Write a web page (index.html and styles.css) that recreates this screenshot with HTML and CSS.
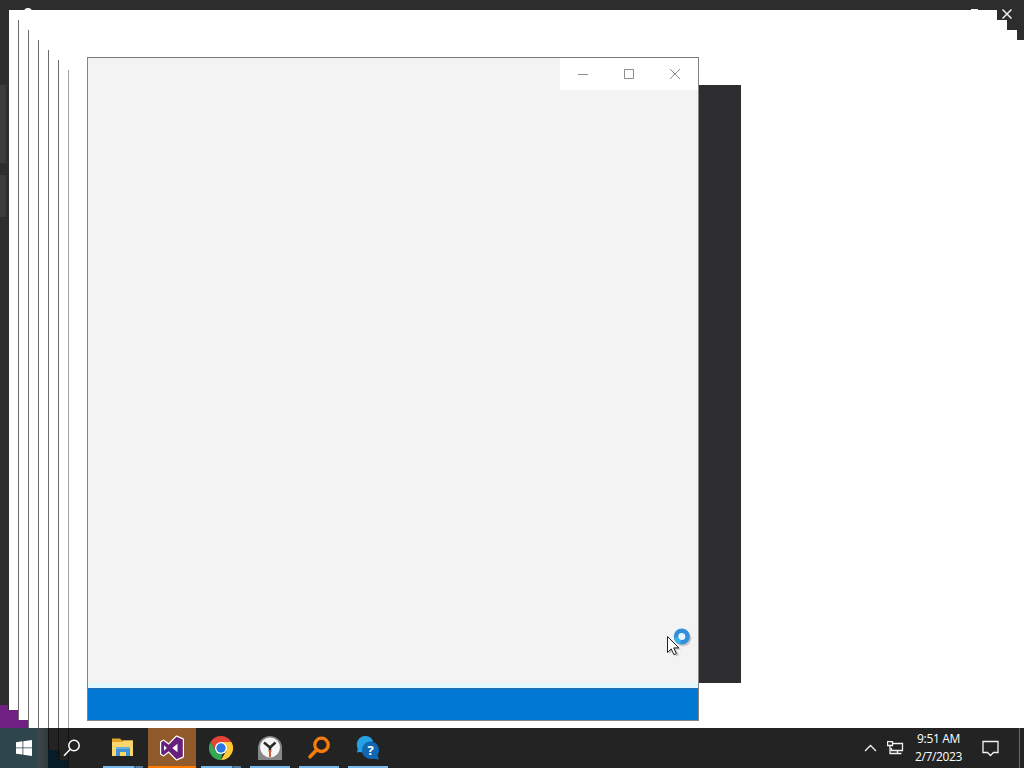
FILE: index.html
```html
<!DOCTYPE html>
<html lang="en">
<head>
  <meta charset="utf-8">
  <title>Desktop</title>
  <link rel="stylesheet" href="styles.css">
</head>
<body>
  <main class="desktop">
    <div class="side-panel panel-one"></div>
    <div class="side-panel panel-two"></div>
    <div class="wallpaper"></div>
    <div class="app-logo"></div>
    <svg class="app-close" viewBox="0 0 10 10"><path d="M.5.5l9 9M9.5.5l-9 9"/></svg>

    <!-- trail of unpainted windows -->
    <div class="ghost ghost-1"></div>
    <div class="ghost ghost-2"></div>
    <div class="ghost ghost-3"></div>
    <div class="ghost ghost-4"></div>
    <div class="ghost ghost-5"></div>
    <div class="ghost ghost-6"></div>
    <div class="ghost ghost-7"></div>
    <div class="app-restore"></div>

    <div class="dark-window"></div>

    <section class="window">
      <header class="window-header">
        <div class="window-buttons">
          <svg viewBox="0 0 46 32"><path d="M18 16.5h10"/></svg>
          <svg viewBox="0 0 46 32"><path d="M18.500 11.500h9v9h-9z"/></svg>
          <svg viewBox="0 0 46 32"><path d="M18 11l10 10M28 11l-10 10"/></svg>
        </div>
      </header>
      <div class="window-body"></div>
      <footer class="window-footer"></footer>
    </section>

    <svg class="cursor" viewBox="0 0 28 32">
      <circle class="busy-shadow" cx="17.300" cy="12.300" r="8"/>
      <circle class="busy-ring" cx="15.800" cy="10.500" r="5.800"/>
      <path class="busy-light" d="M10 11.500a5.800 5.800 0 0 0 4.800 4.800"/>
      <path class="arrow-shadow" d="M3 12v16l4-3.500 3 6 3-1.500-3-5.500h5z"/>
      <path class="arrow" d="M1.500 10.500v16l3.700-3.600 2.700 5.800 2.500-1.200-2.700-5.600h5.200z"/>
    </svg>
  </main>

  <footer class="taskbar">
    <div class="start">
      <svg width="16" height="16" viewBox="0 0 16 16"><path fill="#fff" d="M0 2.200l6.500-.9v6.200H0zM7.300 1.200L16 0v7.500H7.300zM0 8.300h6.500v6.300L0 13.700zM7.300 8.300H16V16l-8.700-1.200z"/></svg>
    </div>
    <div class="search">
      <svg width="18" height="18" viewBox="0 0 18 18" fill="none" stroke="#fff" stroke-width="1.500"><circle cx="11" cy="6.500" r="5.200"/><path d="M7.300 10.200L1 16.800"/></svg>
    </div>
    <nav class="apps">
      <div class="app stacked">
        <svg width="24" height="24" viewBox="0 0 24 24">
          <path fill="#e5a526" d="M1 2.500h8l2 2h11v3H1z"/>
          <path fill="#fbd66b" d="M1 6h10l1.500-1.500H22V20H1z"/>
          <path fill="#3f93d2" d="M5 12h14v8h-4v-4H9v4H5z"/>
          <path fill="#67b0df" d="M5 11h14v2H5z"/>
        </svg>
      </div>
      <div class="app active">
        <svg width="26" height="26" viewBox="0 0 26 26">
          <path fill="#fff" stroke="#fff" stroke-width="2" stroke-linejoin="round" d="M17.500 1.500L24 4.200v17.600l-6.500 2.700-7.800-8-5.200 4L2 19V7l2.500-1.500 5.200 4z"/>
          <path fill="#68217a" d="M17.500 1.800L23.800 4.400v17.200l-6.300 2.600-7.800-8-5.200 4L2.200 18.800V7.200l2.300-1.400 5.200 4z"/>
          <path fill="#fff" d="M18.500 8.800L13.300 13l5.200 4.200zM5 10.300v5.400L7.800 13z"/>
        </svg>
      </div>
      <div class="app stacked">
        <svg width="24" height="24" viewBox="0 0 24 24">
          <path fill="#e94335" d="M1.600 6A12 12 0 0 1 22.400 6H12L6.800 15z"/>
          <path fill="#34a853" d="M1.600 6l5.200 9 6.700 2.800L12 24A12 12 0 0 1 1.600 6z"/>
          <path fill="#fcc934" d="M22.400 6A12 12 0 0 1 12 24l5.200-9L12 6z"/>
          <circle fill="#fff" cx="12" cy="12" r="6"/><circle fill="#2b78e4" cx="12" cy="12" r="4.700"/>
        </svg>
      </div>
      <div class="app">
        <svg width="24" height="24" viewBox="0 0 24 24">
          <path fill="#858789" d="M12 0a12 12 0 0 1 12 12v12H0V12A12 12 0 0 1 12 0z"/>
          <circle fill="#f5f5f3" cx="12" cy="11.500" r="10"/>
          <path fill="none" stroke="#292929" stroke-width="2.500" d="M6 6.500l6 5 5.500-5"/>
          <path stroke="#292929" stroke-width="2.500" d="M12 10.500V16"/>
          <path stroke="#d65a2a" stroke-width="2" d="M12 14v7"/>
        </svg>
      </div>
      <div class="app">
        <svg width="24" height="24" viewBox="0 0 24 24" fill="none" stroke="#f57c0c"><circle cx="14.500" cy="8.800" r="6.700" stroke-width="3.300"/><path stroke-width="3.500" stroke-linecap="round" d="M9.500 14L3 20.800"/></svg>
      </div>
      <div class="app">
        <svg class="help-icon" width="24" height="24" viewBox="0 0 24 24">
          <path fill="#25a2e4" d="M9.500 0C13 0 15.500 1.500 17 5L8 16.500l-4.500-.5-2.500.500.800-4A8.500 8.500 0 0 1 9.500 0z"/>
          <path fill="#1267b3" d="M14.500 5.500c5 0 8.500 3.700 8.500 8.500 0 2-.5 3.500-1.500 5L23 23.500l-5-.8C11 24 6 20 6 14.500c0-5 3.500-9 8.500-9z"/>
          <text x="14.500" y="19">?</text>
        </svg>
      </div>
    </nav>
    <div class="tray">
      <svg class="chevron" width="13" height="8" viewBox="0 0 13 8"><path d="M1 7l5.500-5.500L12 7"/></svg>
      <svg class="network" width="17" height="14" viewBox="0 0 17 14"><path d="M6 2.500h9.500v7H4.500V7M10.500 9.500v3M6.500 12.500h8M.5.5h5v4h-5zM3 4.500v8h4"/></svg>
      <div class="clock">
        <span class="time">9:51 AM</span>
        <span class="date">2/7/2023</span>
      </div>
      <svg class="notifications" width="17" height="17" viewBox="0 0 17 17"><path d="M1 1.500h15v11h-4.500l-3 3-3-3H1z"/></svg>
      <div class="show-desktop"></div>
    </div>
  </footer>
</body>
</html>
```

FILE: styles.css
```css
* {
  box-sizing: border-box;
}
body {
  margin: 0;
  width: 1024px;
  height: 768px;
  display: flex;
  flex-direction: column;
  overflow: hidden;
  font-family: "Open Sans", "Noto Sans", sans-serif;
}
.desktop {
  position: relative;
  flex: 1;
  background: #2d2d2e;
  overflow: hidden;
}
.side-panel {
  position: absolute;
  left: 0;
  width: 6px;
  background: #3c3b3d;
}
.panel-one {
  top: 85px;
  height: 78px;
}
.panel-two {
  top: 175px;
  height: 42px;
}
.wallpaper {
  position: absolute;
  left: 0;
  top: 705px;
  width: 40px;
  height: 23px;
  background: #702082;
}
.app-logo {
  position: absolute;
  left: 24px;
  top: 8px;
  width: 8px;
  height: 8px;
  border-radius: 50%;
  background: #fff;
}
.app-close {
  position: absolute;
  left: 1002px;
  top: 9px;
  width: 10px;
  height: 10px;
  stroke: #eee;
  stroke-width: 1.5;
}
.app-restore {
  position: absolute;
  left: 971px;
  top: 9px;
  width: 7px;
  height: 1px;
  background: #fff;
}
.ghost {
  position: absolute;
  width: 989px;
  height: 700px;
  background: #fff;
  border-left: 1px solid #6c6c6c;
}
.ghost-1 {
  left: 8px;
  top: 10px;
  border-color: #2d2d2e;
}
.ghost-2 {
  left: 18px;
  top: 20px;
}
.ghost-3 {
  left: 28px;
  top: 30px;
}
.ghost-4 {
  left: 38px;
  top: 40px;
}
.ghost-5 {
  left: 48px;
  top: 50px;
}
.ghost-6 {
  left: 58px;
  top: 60px;
}
.ghost-7 {
  left: 68px;
  top: 70px;
  border-color: #a2a2a2;
}
.dark-window {
  position: absolute;
  left: 690px;
  top: 85px;
  width: 51px;
  height: 598px;
  background: #2d2d2f;
}
.window {
  position: absolute;
  left: 87px;
  top: 57px;
  width: 612px;
  height: 664px;
  display: flex;
  flex-direction: column;
  background: #f3f3f3;
  border: 1px solid #858585;
  border-top-color: #777;
}
.window-header {
  display: flex;
  justify-content: flex-end;
}
.window-buttons {
  display: flex;
  background: #fff;
}
.window-buttons svg {
  width: 46px;
  height: 32px;
  fill: none;
  stroke: #8c8c8c;
}
.window-body {
  flex: 1;
  border-bottom: 5px solid #dff9fd;
}
.window-footer {
  height: 32px;
  background: #0078d4;
  border-top: 1px solid #286da8;
}
.cursor {
  position: absolute;
  left: 666px;
  top: 626px;
  width: 28px;
  height: 32px;
}
.busy-shadow {
  fill: #aaa;
  opacity: 0.6;
}
.busy-ring {
  fill: #e5f5fc;
  stroke: #338fda;
  stroke-width: 4.5;
}
.busy-light {
  fill: none;
  stroke: #3fb4e6;
  stroke-width: 4;
}
.arrow-shadow {
  fill: #999;
  opacity: 0.5;
}
.arrow {
  fill: #fff;
  stroke: #222;
}
.taskbar {
  height: 40px;
  display: flex;
  background: #232323;
  color: #fff;
}
.start, .search {
  width: 48px;
  display: flex;
  align-items: center;
  justify-content: center;
}
.start {
  background: linear-gradient(90deg, #30464d 0, #30464d 38px, #42474a 38px, #30393d 48px);
}
/* the window edges show faintly through the bar */
.search {
  background:
    linear-gradient(#111, #111) 0 0 / 1px 22px no-repeat,
    linear-gradient(#111, #111) 10px 0 / 1px 32px no-repeat,
    linear-gradient(#111, #111) 20px 0 / 1px 40px no-repeat,
    linear-gradient(#061c28, #061c28) 0 22px / 12px 18px no-repeat,
    linear-gradient(#091c25, #091c25) 12px 32px / 9px 8px no-repeat;
}
.apps {
  flex: 1;
  display: flex;
  padding-left: 2px;
}
.app {
  position: relative;
  width: 49px;
  display: flex;
  align-items: center;
  justify-content: center;
}
.app::after {
  content: "";
  position: absolute;
  left: 5px;
  bottom: 0;
  width: 40px;
  height: 2px;
  background: #76b9ed;
}
.stacked::after {
  background: linear-gradient(90deg, #76b9ed 0, #76b9ed 31px, #3f6688 31px, #3f6688 33px, #527fa5 33px);
}
.active {
  background: linear-gradient(#915a2a, #915a2a) 1px 0 / 48px 40px no-repeat;
}
.active::after {
  left: 1px;
  width: 48px;
  background: #ff7800;
}
.help-icon text {
  font-size: 13px;
  font-weight: bold;
  text-anchor: middle;
  fill: #fff;
}
.tray {
  display: flex;
  align-items: center;
}
.tray svg {
  fill: none;
  stroke: #f2f2f2;
  stroke-width: 1.3;
}
.chevron {
  margin-right: 10px;
}
.network {
  margin-right: 10px;
}
.clock {
  width: 49px;
  margin-right: 19px;
  display: flex;
  flex-direction: column;
  align-items: center;
  font-size: 12px;
  line-height: 18px;
  white-space: nowrap;
}
.time {
  letter-spacing: -0.35px;
}
.date {
  letter-spacing: -0.4px;
}
.notifications {
  margin-right: 20px;
}
.show-desktop {
  width: 5px;
  height: 40px;
  border-left: 1px solid #666;
}
```
